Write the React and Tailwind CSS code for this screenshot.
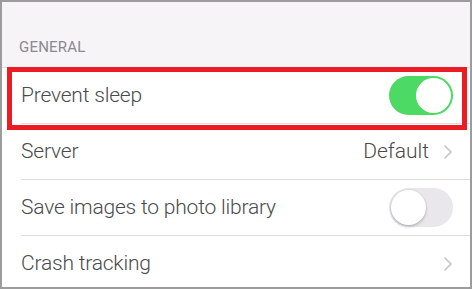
import React from "react"

const Chevron = () => (
  <svg width="8" height="14" viewBox="0 0 8 14" fill="none">
    <polyline points="1,1 7,7 1,13" stroke="#c7c7cc" strokeWidth="1.7" strokeLinecap="round" strokeLinejoin="round" />
  </svg>
)

const Toggle = ({ on }) => (
  <div
    className={
      on
        ? "w-[64px] h-[39px] rounded-full bg-[#4cd964] flex items-center justify-end px-[2px]"
        : "w-[64px] h-[39px] rounded-full bg-[#e9e7ec] flex items-center justify-start px-[2px]"
    }
  >
    <div
      className={
        on
          ? "w-[35px] h-[35px] rounded-full bg-white"
          : "w-[35px] h-[35px] rounded-full bg-white shadow-[0_2px_3px_rgba(0,0,0,0.18),0_0_0_1px_rgba(0,0,0,0.05)]"
      }
    />
  </div>
)

const Row = ({ label, children, last }) => (
  <div className="h-[56px] pl-[19px] flex">
    <div className={"flex-1 flex items-center justify-between pr-[17px] " + (last ? "" : "border-b border-[#dedde1]")}>
      <span className="text-[21px] font-light text-[#4a4a4d] tracking-[-0.2px]">{label}</span>
      {children}
    </div>
  </div>
)

export default function App() {
  return (
    <div
      className="w-[472px] h-[289px] overflow-hidden bg-[#f6f4f7] border-2 border-[#9c9c9c] relative"
      style={{ fontFamily: "Roboto, 'Liberation Sans', sans-serif" }}
    >
      <div className="h-[65px] flex items-end pl-[17px] pb-[9px]">
        <span className="text-[15px] text-[#8a898e] tracking-[0.2px]">GENERAL</span>
      </div>
      <div className="bg-white border-t border-[#dedde1]">
        <Row label="Prevent sleep">
          <Toggle on />
        </Row>
        <Row label="Server">
          <div className="flex items-center gap-[15px] pr-[1px]">
            <span className="text-[21px] font-light text-[#4a4a4d]">Default</span>
            <Chevron />
          </div>
        </Row>
        <Row label="Save images to photo library">
          <Toggle />
        </Row>
        <Row label="Crash tracking" last>
          <div className="pr-[1px] flex items-center">
            <Chevron />
          </div>
        </Row>
      </div>
      <div className="absolute left-[5px] top-[65px] w-[460px] h-[63px] border-[5px] border-[#ec1c24]" />
    </div>
  )
}
